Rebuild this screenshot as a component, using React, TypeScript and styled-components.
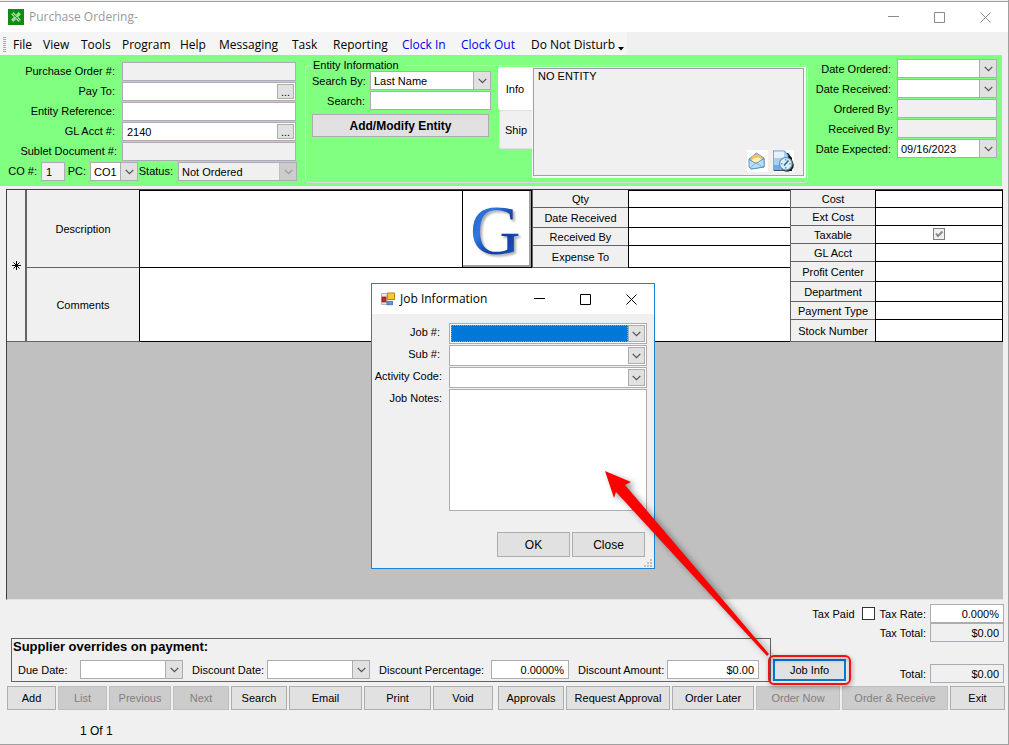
import React from 'react';
import styled, { createGlobalStyle, css } from 'styled-components';

const sans = '"Liberation Sans", Arial, sans-serif';
const ui = '"Open Sans", "Segoe UI", sans-serif';

const GlobalStyle = createGlobalStyle`
  *, *::before, *::after { box-sizing: border-box; }
  body { margin: 0; background: #f0f0f0; }
  button, input, select, textarea {
    font: inherit; color: inherit; margin: 0; padding: 0; border-radius: 0; outline: none;
  }
  body, table { font: 11px/14px ${sans}; color: #000; }
`;

/* ---------- window frame ---------- */

const Window = styled.div`
  position: relative;
  display: flex;
  flex-direction: column;
  min-height: 100vh;
  border: solid #a0a0a0;
  border-width: 0 1px 1px 0;
  background: #f0f0f0;
`;

const TitleBar = styled.header`
  display: flex;
  align-items: center;
  flex: none;
  height: 30px;
  padding-left: 8px;
  background: #fff;
  color: #999;
  font: 12px/16px ${ui};
`;

const DialogBar = styled(TitleBar)`
  padding-left: 9px;
  color: #000;
`;

const TopEdge = styled.div`
  height: 2px;
  border-bottom: 1px solid #a0a0a0;
`;

const Title = styled.h1`
  flex: 1;
  margin: 0 0 0 5px;
  font: inherit;
  white-space: nowrap;
`;

const CaptionButton = styled.button`
  display: grid;
  place-items: center;
  width: 46px;
  height: 28px;
  border: 0;
  background: none;
`;

const MenuBar = styled.nav`
  display: flex;
  height: 23px;
  background: #f0f0f0;
`;

const MenuStrip = styled.div`
  display: flex;
  align-items: center;
  padding: 2px 3px 0 3px;
  background: #f5f5f5;
`;

const Grip = styled.span`
  width: 3px;
  height: 15px;
  margin-right: 7px;
  background: repeating-linear-gradient(#a8a8a8 0 1px, #f5f5f5 1px 2px);
`;

const MenuItem = styled.button<{ $w: number; $blue?: boolean }>`
  width: ${p => p.$w}px;
  border: 0;
  background: none;
  color: ${p => (p.$blue ? '#0000f0' : '#000')};
  font: 12px/16px ${ui};
  text-align: left;
  white-space: nowrap;
`;

const MenuMore = styled.svg`
  margin-top: 8px;
`;

/* ---------- form controls ---------- */

const box = css`
  height: 19px;
  border: 1px solid #abadb3;
  background: #fff;
`;

const TextBox = styled.input<{ $w?: number; $right?: boolean }>`
  ${box}
  flex: ${p => (p.$w ? 'none' : '1')};
  width: ${p => (p.$w ? p.$w + 'px' : '100%')};
  min-width: 0;
  padding: 0 4px;
  text-align: ${p => (p.$right ? 'right' : 'left')};
  &:read-only { background: #f0f0f0; }
`;

const GrowBox = styled(TextBox)`
  flex: 1 1 ${p => p.$w}px;
`;

const ComboRoot = styled.span<{ $w?: number; $grow?: boolean; $roomy?: boolean }>`
  display: grid;
  grid-template-columns: 1fr 17px;
  flex: ${p => (p.$grow ? '1 1' : '0 0')} ${p => (p.$w ? p.$w + 'px' : 'auto')};
  width: ${p => (p.$w ? p.$w + 'px' : '100%')};
  height: ${p => (p.$roomy ? 21 : 19)}px;
  padding: ${p => (p.$roomy ? 1 : 0)}px;
  border: 1px solid #abadb3;
  background: #fff;
`;

const ComboSelect = styled.select<{ $active?: boolean }>`
  grid-area: 1 / 1 / 2 / 3;
  appearance: none;
  min-width: 0;
  height: 100%;
  padding: 0 17px 0 3px;
  border: 0;
  background: transparent;
  opacity: 1;
  &:disabled { background: #f0f0f0; color: #000; opacity: 1; }
  ${p => p.$active && css`
    margin-right: 17px;
    border: 1px dotted #ff8728;
    background: #0078d7;
  `}
`;

const ComboArrow = styled.span<{ $disabled?: boolean }>`
  grid-area: 1 / 2;
  display: grid;
  place-items: center;
  border: 1px solid ${p => (p.$disabled ? '#bfbfbf' : '#adadad')};
  border-width: 0 0 0 1px;
  background: ${p => (p.$disabled ? '#ccc' : '#e1e1e1')};
  color: ${p => (p.$disabled ? '#9a9a9a' : '#555')};
  pointer-events: none;
`;

const RoomyArrow = styled(ComboArrow)`
  border-width: 1px;
`;

type ComboProps = {
  id: string; value?: string; w?: number; grow?: boolean; roomy?: boolean; active?: boolean; disabled?: boolean;
};

function Combo({ id, value = '', w, grow, roomy, active, disabled }: ComboProps) {
  const Arrow = roomy ? RoomyArrow : ComboArrow;
  return (
    <ComboRoot $w={w} $grow={grow} $roomy={roomy}>
      <ComboSelect id={id} $active={active} disabled={disabled} defaultValue={value}>
        <option>{value}</option>
      </ComboSelect>
      <Arrow $disabled={disabled}>
        <svg width="9" height="6" viewBox="0 0 9 6" fill="none" stroke="currentColor" strokeWidth="1.3">
          <path d="M.7.9 4.5 4.7 8.3.9" />
        </svg>
      </Arrow>
    </ComboRoot>
  );
}

const Label = styled.label<{ $w?: number; $pad?: number }>`
  flex: none;
  width: ${p => (p.$w ? p.$w + 'px' : 'auto')};
  padding-right: ${p => p.$pad ?? 0}px;
  text-align: ${p => (p.$pad ? 'right' : 'left')};
  white-space: nowrap;
`;

const PushButton = styled.button<{ $w: number }>`
  flex: 1 1 ${p => p.$w}px;
  height: 24px;
  border: 1px solid #adadad;
  background: #e1e1e1;
  text-align: center;
  white-space: nowrap;
  &:disabled { border-color: #bfbfbf; background: #ccc; color: #808080; }
`;

/* ---------- green header ---------- */

const Header = styled.section`
  display: flex;
  flex: none;
  height: 131px;
  margin-right: 6px;
  background: #80ff80;
`;

const OrderForm = styled.div`
  flex: none;
  display: flex;
  flex-direction: column;
  gap: 1px;
  width: 297px;
  padding-top: 7px;
  label { padding-bottom: 2px; }
`;

const Line = styled.div`
  display: flex;
  align-items: center;
  height: 19px;
`;

const LookupBox = styled.span`
  ${box}
  display: flex;
  flex: 1;
  margin-right: 1px;
  padding-right: 1px;
`;

const LookupInput = styled.input`
  flex: 1;
  min-width: 0;
  padding: 0 4px;
  border: 0;
  background: none;
`;

const LookupButton = styled.button`
  width: 17px;
  height: 15px;
  margin-top: 1px;
  border: 1px solid #adadad;
  background: #e1e1e1;
  line-height: 12px;
`;

const FlatBox = styled(TextBox)`
  margin-right: 1px;
`;

const EntityGroup = styled.fieldset`
  flex: 1;
  min-width: 0;
  margin: 8px 0 3px 8px;
  padding: 0;
  border: 1px solid #dcdcdc;
  border-radius: 4px;
`;

const EntityLegend = styled.legend`
  height: 4px;
  margin-left: 5px;
  padding: 0 6px 0 2px;
  line-height: 4px;
`;

const EntityBody = styled.div`
  display: flex;
  padding: 0 1px 0 6px;
`;

const EntitySearch = styled.div`
  display: flex;
  flex-direction: column;
  flex: none;
  gap: 1px;
  width: 179px;
  margin-right: 7px;
  padding-top: 4px;
`;

const EntityButton = styled.button`
  height: 23px;
  margin: 3px 2px 0 0;
  border: 1px solid #adadad;
  background: #e1e1e1;
  font: bold 12px/16px ${sans};
`;

const Tabs = styled.div`
  flex: none;
  display: flex;
  flex-direction: column;
  align-items: flex-end;
  width: 34px;
`;

const Tab = styled.button<{ $on?: boolean }>`
  width: ${p => (p.$on ? 34 : 33)}px;
  height: ${p => (p.$on ? 43 : 39)}px;
  border: ${p => (p.$on ? 0 : 1)}px solid #e0e0e0;
  border-right: 0;
  border-radius: 3px 0 0 3px;
  background: ${p => (p.$on ? '#fff' : '#f0f0f0')};
`;

const EntityPanel = styled.div`
  position: relative;
  flex: 1;
  height: 111px;
  padding: 1px 2px 2px 1px;
  background: #f8f8f8;
`;

const EntityText = styled.textarea`
  display: block;
  width: 100%;
  height: 108px;
  padding: 0 4px;
  border: 1px solid #a0a0a8;
  background: #f0f0f0;
  resize: none;
`;

const EntityTools = styled.div`
  position: absolute;
  right: 12px;
  bottom: 6px;
  display: flex;
  gap: 5px;
`;

const ToolButton = styled.button`
  width: 21px;
  height: 22px;
  border: 0;
  background: #fff;
`;

const DateForm = styled.div`
  flex: none;
  display: flex;
  flex-direction: column;
  gap: 1px;
  width: 194px;
  padding: 4px 5px 0 0;
`;

/* ---------- order item grid ---------- */

const GridArea = styled.section`
  flex: 1 0 410px;
  margin: 3px 5px 0 6px;
  border: solid #404040;
  border-width: 1px 0 0 1px;
  border-bottom: 1px solid #e0e0e0;
  background: #c0c0c0;
`;

const RecordRow = styled.div`
  display: flex;
  height: 152px;
  background: #fff;
`;

const RowHandle = styled.div`
  flex: none;
  display: grid;
  place-items: center;
  width: 20px;
  border-right: 2px solid #646464;
  border-bottom: 1px solid #646464;
  background: #f0f0f0;
`;

const RecordMain = styled.div`
  flex: 1;
  min-width: 0;
`;

const RecordBand = styled.div<{ $h: number }>`
  display: flex;
  height: ${p => p.$h}px;
`;

const BandLabel = styled.label`
  flex: none;
  display: grid;
  place-items: center;
  width: 113px;
  border-bottom: 1px solid #646464;
  border-right: 1px solid #000;
  background: #f0f0f0;
`;

const BandText = styled.textarea<{ $first?: boolean }>`
  flex: 1;
  min-width: 0;
  padding: 2px 4px;
  border: solid #000;
  border-width: ${p => (p.$first ? 1 : 0)}px 0 1px 0;
  resize: none;
`;

const LogoButton = styled.button`
  flex: none;
  width: 70px;
  border: 1px solid #000;
  background: #fff;
  box-shadow: inset -2px -2px #a0a0a0;
`;

const FieldTable = styled.table<{ $labels: number; $w: number }>`
  flex: none;
  width: ${p => p.$w}px;
  table-layout: fixed;
  border-spacing: 0;
  th { width: ${p => p.$labels}px; }
  tr:first-child td { border-top-width: 1px; }
`;

const FieldHead = styled.th<{ $h: number }>`
  height: ${p => p.$h}px;
  padding: 0;
  border: solid #646464;
  border-width: 0 0 1px 1px;
  background: #f0f0f0;
  font-weight: normal;
  text-align: center;
`;

const FieldCell = styled.td<{ $edge?: boolean }>`
  padding: 0;
  border: solid #000;
  border-width: 0 ${p => (p.$edge ? 1 : 0)}px 1px 1px;
  background: #fff;
  text-align: center;
`;

const CellInput = styled.input`
  display: block;
  width: 100%;
  height: 14px;
  border: 0;
  background: none;
`;

const Check = styled.span<{ $sunken?: boolean }>`
  display: inline-grid;
  width: ${p => (p.$sunken ? 12 : 13)}px;
  height: ${p => (p.$sunken ? 12 : 13)}px;
  vertical-align: top;
  > * { grid-area: 1 / 1; }
  > svg { pointer-events: none; }
  input {
    appearance: none;
    border: 1px solid ${p => (p.$sunken ? '#808080' : '#333')};
    background: ${p => (p.$sunken ? '#f0f0f0' : '#fff')};
  }
`;

/* ---------- footer ---------- */

const Footer = styled.footer`
  display: flex;
  align-items: flex-end;
  padding: 4px 4px 0 11px;
`;

const Supplier = styled.section`
  flex: 1;
  min-width: 0;
  height: 44px;
  margin-bottom: 1px;
  border: 1px solid #646464;
`;

const SupplierTitle = styled.h2`
  margin: 0 0 5px 1px;
  font: bold 13px/16px ${sans};
`;

const SupplierFields = styled.div`
  display: flex;
  align-items: center;
  padding: 0 11px 0 6px;
`;

const Gap = styled.span`
  flex: none;
  width: 9px;
`;

const JobInfoSpot = styled.div`
  position: relative;
  flex: none;
  margin: 0 0 2px 2px;
  &::after {
    content: '';
    position: absolute;
    inset: -4px -5px;
    border: 2px solid #f21010;
    border-radius: 6px;
    filter: drop-shadow(1px 2px 2px rgba(0, 0, 0, 0.45));
    pointer-events: none;
  }
`;

const JobInfoButton = styled.button`
  display: block;
  width: 73px;
  height: 22px;
  border: 2px solid #0078d7;
  background: #e1e1e1;
`;

const Totals = styled.div`
  flex: none;
  width: 158px;
`;

const TotalLine = styled.div<{ $top?: number }>`
  display: flex;
  align-items: center;
  justify-content: flex-end;
  margin-top: ${p => p.$top ?? 0}px;
  white-space: nowrap;
`;

const TaxCheck = styled(Check)`
  flex: none;
  margin: 0 5px 0 7px;
`;

const Actions = styled.div`
  display: flex;
  gap: 5px;
  margin: 3px 3px 0 7px;
`;

const ActionGroup = styled.div<{ $w: number }>`
  display: flex;
  flex: 1 1 ${p => p.$w}px;
  gap: 2px;
`;

const RecordCount = styled.p`
  margin: 14px 0 6px 80px;
  font: 12px/14px ${sans};
`;

/* ---------- dialog ---------- */

const Dialog = styled.section`
  position: absolute;
  left: 371px;
  top: 283px;
  width: 284px;
  border: 1px solid #1883d7;
  background: #f0f0f0;
`;

const DialogForm = styled.div`
  display: flex;
  flex-direction: column;
  gap: 1px;
  padding: 9px 7px 0 0;
`;

const DialogLine = styled.div`
  display: flex;
  align-items: flex-start;
`;

const DialogLabel = styled(Label)`
  padding-top: 2px;
`;

const Notes = styled.textarea`
  flex: 1;
  min-width: 0;
  height: 122px;
  border: 1px solid #abadb3;
  background: #fff;
  resize: none;
`;

const DialogButtons = styled.div`
  display: flex;
  justify-content: flex-end;
  gap: 2px;
  padding: 21px 9px 11px 0;
`;

const DialogButton = styled.button`
  width: 73px;
  height: 25px;
  border: 1px solid #adadad;
  background: #e1e1e1;
  font: 12px/16px ${sans};
`;

const SizeGrip = styled.svg`
  position: absolute;
  right: 2px;
  bottom: 1px;
`;

const Arrow = styled.svg`
  position: absolute;
  left: 596px;
  top: 463px;
  overflow: visible;
  pointer-events: none;
  filter: drop-shadow(4px 3px 3px rgba(0, 0, 0, 0.4));
`;

/* ---------- pieces ---------- */

function CaptionButtons({ color }: { color: string }) {
  const shapes = [
    { name: 'Minimize', d: 'M0 4.5H11' },
    { name: 'Maximize', d: 'M.5.5H10.5V10.5H.5Z' },
    { name: 'Close', d: 'M.5.5 10.5 10.5M10.5.5.5 10.5' },
  ];
  return (
    <>
      {shapes.map(s => (
        <CaptionButton key={s.name} type="button" aria-label={s.name}>
          <svg width="11" height="11" viewBox="0 0 11 11" fill="none" stroke={color}>
            <path d={s.d} />
          </svg>
        </CaptionButton>
      ))}
    </>
  );
}

function AppIcon() {
  return (
    <svg width="16" height="16" viewBox="0 0 16 16">
      <rect width="16" height="16" fill="#138a13" />
      <path d="M4.200 4.200 11.800 11.800M11.800 4.200 4.200 11.800" stroke="#a4dba4" strokeWidth="3.200" />
      <path d="M4.200 4.200 11.800 11.800" stroke="#2f9a2f" strokeWidth=".9" />
      <path d="M9.500 8 8 9.500M8 6.500 6.500 8" stroke="#138a13" strokeWidth=".9" />
    </svg>
  );
}

function FormIcon() {
  return (
    <svg width="14" height="14" viewBox="0 0 14 14">
      <path d="M.5 1.500H6V12.500H.5Z" fill="#e8e8e8" stroke="#b8b8b8" />
      <rect x="1" y="5" width="4" height="5" fill="#c52b1c" stroke="#8c1a10" strokeWidth=".7" />
      <rect x="6.500" y="1" width="7" height="6.500" fill="#f8c832" stroke="#b98a12" />
      <rect x="6" y="9.300" width="5.500" height="3.500" fill="#5b96ea" stroke="#3f6db5" strokeWidth=".8" />
    </svg>
  );
}

function MailIcon() {
  return (
    <svg width="21" height="22" viewBox="0 0 21 22">
      <path d="M2 9 9.500 3 17 8V17L4 19Z" fill="#8fc4ea" stroke="#4a85b5" strokeWidth=".8" />
      <path d="M4 9C5 4 12 2.500 15 7.500L15 12 4.500 13Z" fill="#fbc14e" />
      <path d="M5 10C7 7 12 6.500 14.500 9.500V12L5 13Z" fill="#fff0b8" />
      <path d="M2 9.500 9 13.500 17 8.500V17L4 19 2 17Z" fill="#b9e0f7" stroke="#4a85b5" strokeWidth=".8" />
      <path d="M3 18 8.500 13 16 17" fill="none" stroke="#6ca5cf" strokeWidth=".8" />
    </svg>
  );
}

function HistoryIcon() {
  return (
    <svg width="21" height="22" viewBox="0 0 21 22">
      <path d="M1 3H15L19 8V21H1Z" fill="#111" />
      <path d="M0 1H11.500L15 5V20H0Z" fill="#a9cff4" stroke="#5587c4" />
      <path d="M1 1.500H11V8H1Z" fill="#e4f2fd" />
      <path d="M1 15H7V19.500H1Z" fill="#6fa8e6" />
      <circle cx="14" cy="15" r="6.800" fill="#1b1b1b" />
      <circle cx="12.800" cy="13.800" r="6.300" fill="#d5edf8" stroke="#6a8ca3" strokeWidth="1.200" />
      <path d="M12.800 9V10.500M12.800 17V18.500M8 13.800H9.500M16 13.800H17.500" stroke="#47728f" />
      <path d="M11 15.500 15.500 10.500" stroke="#2b5f86" strokeWidth="1.400" />
    </svg>
  );
}

const LogoArt = styled.svg`
  display: block;
  margin: 0 auto;
  overflow: visible;
`;

function GLogo() {
  return (
    <LogoArt width="58" height="72" viewBox="0 0 58 72" role="img" aria-label="G">
      <defs>
        <linearGradient id="g-blue" x1="0" y1="0" x2="1" y2="1">
          <stop offset="0" stopColor="#1c4fc0" />
          <stop offset=".35" stopColor="#2f78e0" />
          <stop offset=".6" stopColor="#123a9c" />
          <stop offset="1" stopColor="#2560d0" />
        </linearGradient>
        <filter id="g-shadow" x="-20%" y="-20%" width="150%" height="150%">
          <feDropShadow dx="2" dy="2" stdDeviation="1.2" floodColor="#555" floodOpacity=".5" />
        </filter>
      </defs>
      <text x="2" y="61" fontFamily='"Liberation Serif", serif' fontSize="70" fill="url(#g-blue)" filter="url(#g-shadow)">G</text>
    </LogoArt>
  );
}

const menu: [string, number, boolean?][] = [
  ['File', 30], ['View', 38], ['Tools', 41], ['Program', 58], ['Help', 39], ['Messaging', 73],
  ['Task', 41], ['Reporting', 69], ['Clock In', 59, true], ['Clock Out', 70, true], ['Do Not Disturb', 87],
];

const leftFields: { name: string; h: number }[] = [
  { name: 'Qty', h: 18 }, { name: 'Date Received', h: 20 }, { name: 'Received By', h: 18 }, { name: 'Expense To', h: 22 },
];

const rightFields: { name: string; h: number }[] = [
  { name: 'Cost', h: 18 }, { name: 'Ext Cost', h: 18 }, { name: 'Taxable', h: 18 }, { name: 'GL Acct', h: 18 },
  { name: 'Profit Center', h: 20 }, { name: 'Department', h: 20 }, { name: 'Payment Type', h: 18 }, { name: 'Stock Number', h: 22 },
];

const actions: [string, number, boolean?][][] = [
  [['Add', 49], ['List', 49, true], ['Previous', 62, true], ['Next', 56, true], ['Search', 56], ['Email', 73], ['Print', 67], ['Void', 60]],
  [['Approvals', 66], ['Request Approval', 104], ['Order Later', 82], ['Order Now', 84, true], ['Order & Receive', 106, true], ['Exit', 55]],
];

type FieldsProps = { rows: { name: string; h: number }[]; labels: number; width: number; edge?: boolean };

function Fields({ rows, labels, width, edge }: FieldsProps) {
  return (
    <FieldTable $labels={labels} $w={width}>
      <tbody>
        {rows.map(r => (
          <tr key={r.name}>
            <FieldHead scope="row" $h={r.h}>{r.name}</FieldHead>
            <FieldCell $edge={edge}>
              {r.name === 'Taxable' ? (
                <Check $sunken>
                  <input type="checkbox" aria-label="Taxable" defaultChecked disabled />
                  <svg width="12" height="12" viewBox="0 0 12 12" fill="none" stroke="#8a8a8a" strokeWidth="2">
                    <path d="M3 5.500 5 8 9.500 3.500" />
                  </svg>
                </Check>
              ) : (
                <CellInput aria-label={r.name} />
              )}
            </FieldCell>
          </tr>
        ))}
      </tbody>
    </FieldTable>
  );
}

export default function App() {
  return (
    <>
      <GlobalStyle />
      <Window>
        <TopEdge />
        <TitleBar>
          <AppIcon />
          <Title>Purchase Ordering-</Title>
          <CaptionButtons color="#8a8a8a" />
        </TitleBar>

        <MenuBar>
          <MenuStrip>
            <Grip />
            {menu.map(([name, w, blue]) => (
              <MenuItem key={name} type="button" $w={w} $blue={blue}>{name}</MenuItem>
            ))}
            <MenuMore width="6" height="4" viewBox="0 0 6 4"><path d="M0 0H6L3 3.500Z" /></MenuMore>
          </MenuStrip>
        </MenuBar>

        <Header>
          <OrderForm>
            <Line>
              <Label htmlFor="po" $w={122} $pad={7}>Purchase Order #:</Label>
              <FlatBox id="po" readOnly />
            </Line>
            <Line>
              <Label htmlFor="payto" $w={122} $pad={7}>Pay To:</Label>
              <LookupBox>
                <LookupInput id="payto" />
                <LookupButton type="button">...</LookupButton>
              </LookupBox>
            </Line>
            <Line>
              <Label htmlFor="ref" $w={122} $pad={7}>Entity Reference:</Label>
              <FlatBox id="ref" />
            </Line>
            <Line>
              <Label htmlFor="gl" $w={122} $pad={7}>GL Acct #:</Label>
              <LookupBox>
                <LookupInput id="gl" defaultValue="2140" />
                <LookupButton type="button">...</LookupButton>
              </LookupBox>
            </Line>
            <Line>
              <Label htmlFor="sublet" $w={122} $pad={5}>Sublet Document #:</Label>
              <FlatBox id="sublet" readOnly />
            </Line>
            <Line>
              <Label htmlFor="co" $w={41} $pad={4}>CO #:</Label>
              <TextBox id="co" $w={24} defaultValue="1" readOnly />
              <Label htmlFor="pc" $w={25} $pad={4}>PC:</Label>
              <Combo id="pc" w={48} value="CO1" />
              <Label htmlFor="status" $w={40} $pad={5}>Status:</Label>
              <Combo id="status" w={119} value="Not Ordered" disabled />
            </Line>
          </OrderForm>

          <EntityGroup>
            <EntityLegend>Entity Information</EntityLegend>
            <EntityBody>
              <EntitySearch>
                <Line>
                  <Label htmlFor="searchby" $w={58} $pad={5}>Search By:</Label>
                  <Combo id="searchby" w={121} value="Last Name" />
                </Line>
                <Line>
                  <Label htmlFor="search" $w={58} $pad={5}>Search:</Label>
                  <TextBox id="search" />
                </Line>
                <EntityButton type="button">Add/Modify Entity</EntityButton>
              </EntitySearch>
              <Tabs>
                <Tab type="button" $on>Info</Tab>
                <Tab type="button">Ship</Tab>
              </Tabs>
              <EntityPanel>
                <EntityText aria-label="Entity" readOnly defaultValue="NO ENTITY" />
                <EntityTools>
                  <ToolButton type="button" aria-label="Email"><MailIcon /></ToolButton>
                  <ToolButton type="button" aria-label="History"><HistoryIcon /></ToolButton>
                </EntityTools>
              </EntityPanel>
            </EntityBody>
          </EntityGroup>

          <DateForm>
            <Line>
              <Label htmlFor="d-ordered" $w={89} $pad={6}>Date Ordered:</Label>
              <Combo id="d-ordered" w={100} />
            </Line>
            <Line>
              <Label htmlFor="d-received" $w={89} $pad={6}>Date Received:</Label>
              <Combo id="d-received" w={100} />
            </Line>
            <Line>
              <Label htmlFor="ordered-by" $w={89} $pad={4}>Ordered By:</Label>
              <TextBox id="ordered-by" readOnly />
            </Line>
            <Line>
              <Label htmlFor="received-by" $w={89} $pad={4}>Received By:</Label>
              <TextBox id="received-by" readOnly />
            </Line>
            <Line>
              <Label htmlFor="d-expected" $w={89} $pad={6}>Date Expected:</Label>
              <Combo id="d-expected" w={100} value="09/16/2023" />
            </Line>
          </DateForm>
        </Header>

        <GridArea>
          <RecordRow>
            <RowHandle>
              <svg width="9" height="9" viewBox="0 0 9 9" stroke="#000" fill="none">
                <path d="M4.500 0V9M0 4.500H9M1.500 1.500 7.500 7.500M7.500 1.500 1.500 7.500" />
              </svg>
            </RowHandle>
            <RecordMain>
              <RecordBand $h={78}>
                <BandLabel htmlFor="desc">Description</BandLabel>
                <BandText id="desc" $first />
                <LogoButton type="button" aria-label="Google search"><GLogo /></LogoButton>
                <Fields rows={leftFields} labels={96} width={258} />
              </RecordBand>
              <RecordBand $h={74}>
                <BandLabel htmlFor="comments">Comments</BandLabel>
                <BandText id="comments" />
              </RecordBand>
            </RecordMain>
            <Fields rows={rightFields} labels={85} width={213} edge />
          </RecordRow>
        </GridArea>

        <Footer>
          <Supplier>
            <SupplierTitle>Supplier overrides on payment:</SupplierTitle>
            <SupplierFields>
              <Label htmlFor="due" $w={62}>Due Date:</Label>
              <Combo id="due" w={103} grow />
              <Gap />
              <Label htmlFor="disc-date" $w={75}>Discount Date:</Label>
              <Combo id="disc-date" w={103} grow />
              <Gap />
              <Label htmlFor="disc-pct" $w={112}>Discount Percentage:</Label>
              <GrowBox id="disc-pct" $w={78} $right defaultValue="0.0000%" />
              <Gap />
              <Label htmlFor="disc-amt" $w={89}>Discount Amount:</Label>
              <GrowBox id="disc-amt" $w={92} $right defaultValue="$0.00" />
            </SupplierFields>
          </Supplier>
          <JobInfoSpot>
            <JobInfoButton type="button">Job Info</JobInfoButton>
          </JobInfoSpot>
          <Totals>
            <TotalLine>
              <Label htmlFor="taxpaid">Tax Paid</Label>
              <TaxCheck><input id="taxpaid" type="checkbox" /></TaxCheck>
              <Label htmlFor="taxrate" $pad={4}>Tax Rate:</Label>
              <TextBox id="taxrate" $w={74} $right defaultValue="0.000%" />
            </TotalLine>
            <TotalLine>
              <Label htmlFor="taxtotal" $pad={4}>Tax Total:</Label>
              <TextBox id="taxtotal" $w={74} $right readOnly defaultValue="$0.00" />
            </TotalLine>
            <TotalLine $top={22}>
              <Label htmlFor="total" $pad={4}>Total:</Label>
              <TextBox id="total" $w={74} $right readOnly defaultValue="$0.00" />
            </TotalLine>
          </Totals>
        </Footer>

        <Actions>
          {actions.map((group, i) => (
            <ActionGroup key={i} $w={i === 0 ? 486 : 507}>
              {group.map(([name, w, off]) => (
                <PushButton key={name} type="button" $w={w} disabled={off}>{name}</PushButton>
              ))}
            </ActionGroup>
          ))}
        </Actions>
        <RecordCount>1 Of 1</RecordCount>

        <Dialog role="dialog" aria-label="Job Information">
          <DialogBar>
            <FormIcon />
            <Title as="h2">Job Information</Title>
            <CaptionButtons color="#000" />
          </DialogBar>
          <DialogForm>
            <DialogLine>
              <DialogLabel htmlFor="job" $w={77} $pad={9}>Job #:</DialogLabel>
              <Combo id="job" w={198} roomy active />
            </DialogLine>
            <DialogLine>
              <DialogLabel htmlFor="sub" $w={77} $pad={9}>Sub #:</DialogLabel>
              <Combo id="sub" w={198} roomy />
            </DialogLine>
            <DialogLine>
              <DialogLabel htmlFor="activity" $w={77} $pad={7}>Activity Code:</DialogLabel>
              <Combo id="activity" w={198} roomy />
            </DialogLine>
            <DialogLine>
              <DialogLabel htmlFor="notes" $w={77} $pad={7}>Job Notes:</DialogLabel>
              <Notes id="notes" />
            </DialogLine>
          </DialogForm>
          <DialogButtons>
            <DialogButton type="button">OK</DialogButton>
            <DialogButton type="button">Close</DialogButton>
          </DialogButtons>
          <SizeGrip width="8" height="8" viewBox="0 0 8 8" fill="#bfbfbf">
            <path d="M6 0h2v2H6zM3 3h2v2H3zM6 3h2v2H6zM0 6h2v2H0zM3 6h2v2H3zM6 6h2v2H6z" />
          </SizeGrip>
        </Dialog>

        <Arrow width="175" height="195" viewBox="0 0 175 195" fill="#f00">
          <path d="M9 8 35 19 29 22 173 191 171 193 20 29 18 35Z" />
        </Arrow>
      </Window>
    </>
  );
}
